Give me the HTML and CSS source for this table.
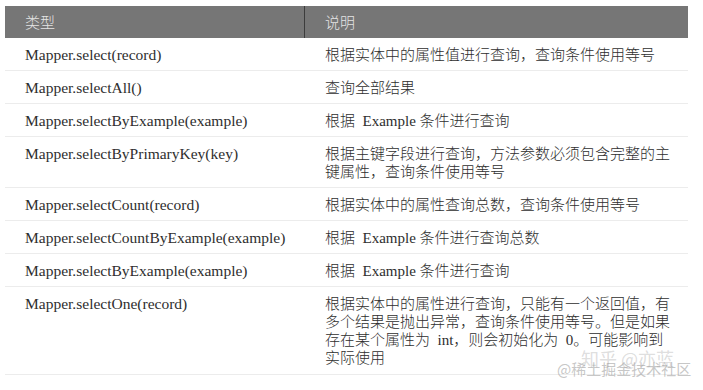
FILE: index.html
```html
<!DOCTYPE html>
<html lang="zh">
<head>
<meta charset="utf-8">
<title>Mapper 方法</title>
<link rel="stylesheet" href="styles.css">
</head>
<body>
<div class="page">
  <div class="table">
    <div class="row head">
      <div class="cell c1">类型</div>
      <div class="cell c2">说明</div>
    </div>
    <div class="row">
      <div class="cell c1 code">Mapper.select(record)</div>
      <div class="cell c2">根据实体中的属性值进行查询，查询条件使用等号</div>
    </div>
    <div class="row">
      <div class="cell c1 code">Mapper.selectAll()</div>
      <div class="cell c2">查询全部结果</div>
    </div>
    <div class="row">
      <div class="cell c1 code">Mapper.selectByExample(example)</div>
      <div class="cell c2">根据&nbsp; Example 条件进行查询</div>
    </div>
    <div class="row">
      <div class="cell c1 code">Mapper.selectByPrimaryKey(key)</div>
      <div class="cell c2">根据主键字段进行查询，方法参数必须包含完整的主<br>键属性，查询条件使用等号</div>
    </div>
    <div class="row">
      <div class="cell c1 code">Mapper.selectCount(record)</div>
      <div class="cell c2">根据实体中的属性查询总数，查询条件使用等号</div>
    </div>
    <div class="row">
      <div class="cell c1 code">Mapper.selectCountByExample(example)</div>
      <div class="cell c2">根据&nbsp; Example 条件进行查询总数</div>
    </div>
    <div class="row">
      <div class="cell c1 code">Mapper.selectByExample(example)</div>
      <div class="cell c2">根据&nbsp; Example 条件进行查询</div>
    </div>
    <div class="row last">
      <div class="cell c1 code">Mapper.selectOne(record)</div>
      <div class="cell c2">根据实体中的属性进行查询，只能有一个返回值，有<br>多个结果是抛出异常，查询条件使用等号。但是如果<br>存在某个属性为&nbsp; int，则会初始化为&nbsp; 0。可能影响到<br>实际使用</div>
    </div>
  </div>
  <div class="watermark">
    <span class="wm1">知乎 @亦蓝</span>
    <span class="wm2">@稀土掘金技术社区</span>
  </div>
</div>
</body>
</html>
```

FILE: styles.css
```css
* { box-sizing: border-box; }
html, body { margin: 0; padding: 0; background: #ffffff; }
body {
  font-family: "Liberation Serif", "Noto Sans CJK SC", serif;
  color: #2e2e2e;
}
.page {
  position: relative;
  width: 703px;
  height: 390px;
  padding: 6px 0 0 5px;
}
.table {
  width: 683px;
  display: flex;
  flex-direction: column;
}
.row {
  display: grid;
  grid-template-columns: 300px 383px;
  border-bottom: 1px solid #ececec;
}
.row.head {
  background: #767676;
  border-bottom: none;
}
.cell {
  font-size: 15px;
  line-height: 18px;
  font-weight: 300;
  padding: 8px 12px 6px 20px;
  white-space: nowrap;
}
.head .cell {
  color: #e4e4e4;
  font-family: "Noto Sans CJK SC", sans-serif;
  padding: 7px 12px 7px 20px;
}
.head .c1 { border-right: 1px solid #3c3c3c; }
.code { font-size: 15.5px; font-weight: 400; }
.row.last .cell { padding-bottom: 7px; }
.watermark {
  position: absolute;
  left: 557px;
  top: 348px;
  width: 135px;
  height: 30px;
  font-family: "Noto Sans CJK SC", sans-serif;
  color: rgba(150, 150, 150, 0.55);
}
.wm1 {
  position: absolute;
  left: 24px;
  top: 0;
  font-size: 18px;
  line-height: 20px;
  color: rgba(170, 170, 170, 0.4);
  white-space: nowrap;
}
.wm2 {
  position: absolute;
  left: 0;
  top: 12px;
  font-size: 15px;
  line-height: 17px;
  white-space: nowrap;
}
```
